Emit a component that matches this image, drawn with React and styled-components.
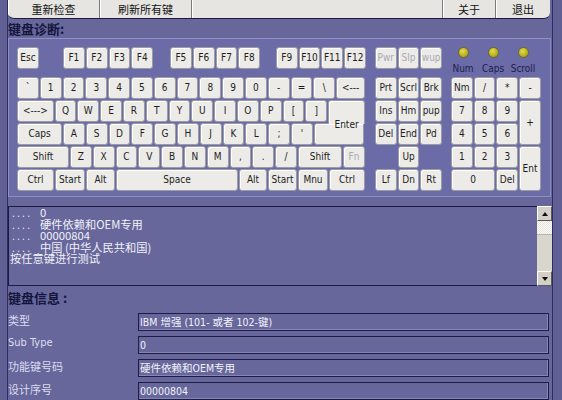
import React from 'react';
import styled, { createGlobalStyle } from 'styled-components';

const UI = `"DejaVu Sans Condensed", "DejaVu Sans", "Noto Sans CJK SC", sans-serif`;
const CJK = `"Noto Sans CJK SC", "DejaVu Sans", sans-serif`;

const Global = createGlobalStyle`
  html, body { margin: 0; padding: 0; }
  body { background: #606094; font-family: ${UI}; }
`;

const Window = styled.div`
  width: 562px;
  height: 400px;
  overflow: hidden;
  background: #606094;
  display: flex;
`;

const Main = styled.div`
  margin-left: 7px;
  width: 544px;
  flex: none;
  border-left: 1px solid #2e2e62;
  border-right: 1px solid #2e2e62;
  background: #67679c;
  display: flex;
  flex-direction: column;
`;

const TopBar = styled.div`
  display: flex;
  height: 18px;
  margin-right: 2px;
  background: #e6e5e1;
  border-bottom: 1px solid #1c1c3e;
  border-radius: 0 0 6px 6px;
  overflow: hidden;
`;

const TopButton = styled.div`
  width: ${(p) => p.$w}px;
  flex: none;
  box-sizing: border-box;
  display: flex;
  align-items: center;
  justify-content: center;
  font: 11px ${CJK};
  color: #111;
  border-right: ${(p) => (p.$last ? 'none' : '1px solid #7a7a7a')};
  box-shadow: inset 1px 0 0 #ffffff;
`;

const TopSpacer = styled.div`
  flex: 1;
  border-right: 1px solid #7a7a7a;
  box-shadow: inset 1px 0 0 #ffffff;
`;

const SectionTitle = styled.div`
  height: ${(p) => p.$h || 19}px;
  line-height: ${(p) => p.$h || 19}px;
  margin-top: ${(p) => p.$mt || 0}px;
  font: bold 13px ${CJK};
  color: #15153c;
  white-space: pre;
`;

const Panel = styled.div`
  box-sizing: border-box;
  height: 160px;
  margin-right: 1px;
  padding: 8px 0 0 8px;
  background: #6b6ba7;
  border: 1px solid #8f8fc2;
  border-right-color: #8a8abd;
  display: flex;
  flex-direction: column;
`;

const FnRow = styled.div`
  display: flex;
  align-items: flex-start;
  height: 22px;
`;

const KeyGroup = styled.div`
  display: flex;
  gap: 1px;
  margin-left: ${(p) => p.$ml || 0}px;
`;

const Key = styled.div`
  box-sizing: border-box;
  width: ${(p) => (p.$w ? `${p.$w}px` : 'auto')};
  height: 22px;
  flex: none;
  display: flex;
  align-items: center;
  justify-content: center;
  background: #ecebe8;
  border: 1px solid #9c9ca4;
  border-radius: 3px;
  box-shadow: inset 1px 1px 0 #ffffff;
  color: ${(p) => (p.$dim ? '#a9a9b4' : '#1c1c1c')};
  font-size: 10px;
  font-family: ${UI};
  white-space: pre;
  grid-column: ${(p) => p.$col || 'auto'};
  grid-row: ${(p) => p.$row || 'auto'};
  ${(p) => (p.$row || p.$col ? 'width: auto; height: auto;' : '')}
`;

const EnterTop = styled(Key)`
  height: 24px;
  margin-bottom: -2px;
  border-bottom: none;
  border-radius: 3px 3px 0 0;
  position: relative;
  z-index: 1;
  align-items: flex-end;
`;

const EnterLabel = styled.span`
  transform: translateY(6px);
`;

const EnterBottom = styled(Key)`
  border-radius: 3px 0 3px 3px;
`;

const LedGroup = styled.div`
  display: flex;
  margin-left: ${(p) => p.$ml || 0}px;
`;

const LedCell = styled.div`
  width: 30px;
  display: flex;
  flex-direction: column;
  align-items: center;
  gap: 5px;
`;

const Led = styled.span`
  width: 11px;
  height: 11px;
  box-sizing: border-box;
  border-radius: 50%;
  border: 1px solid #6d6a24;
  background: radial-gradient(circle at 40% 35%, #e2da52, #bdb423 55%, #8d8618);
`;

const LedLabel = styled.span`
  font: 10px ${UI};
  color: #1d1d4d;
  line-height: 11px;
`;

const Board = styled.div`
  display: flex;
  margin-top: 8px;
`;

const MainBlock = styled.div`
  width: 348px;
  display: flex;
  flex-direction: column;
  gap: 1px;
`;

const KeyRow = styled.div`
  display: flex;
  gap: 1px;
  height: 22px;
  align-items: flex-start;
`;

const KeyGrid = styled.div`
  display: grid;
  grid-template-columns: repeat(${(p) => p.$cols}, ${(p) => p.$cw}px);
  grid-template-rows: repeat(5, 22px);
  gap: 1px;
  margin-left: ${(p) => p.$ml}px;
`;

const LogRow = styled.div`
  display: flex;
  height: 80px;
  margin-top: 9px;
`;

const LogText = styled.div`
  flex: 1;
  box-sizing: border-box;
  border: 1px solid #1b1b42;
  border-right: none;
  padding: 0 0 0 1px;
  color: #f2f2f8;
  font: 11.25px ${CJK};
  line-height: 11.5px;
`;

const LogLine = styled.div`
  white-space: pre;
  height: 11.5px;
`;

const Dots = styled.span`
  display: inline-block;
  width: 30px;
  padding-left: 2px;
  box-sizing: border-box;
  letter-spacing: 2.2px;
  font-family: ${UI};
  font-size: 10px;
`;

const ScrollBar = styled.div`
  width: 15px;
  flex: none;
  display: flex;
  flex-direction: column;
  background: #d9d6cd;
`;

const ScrollBtn = styled.div`
  height: 15px;
  box-sizing: border-box;
  background: #d4d0c8;
  border: 1px solid;
  border-color: #ffffff #5a5a5a #5a5a5a #ffffff;
  display: flex;
  align-items: center;
  justify-content: center;
`;

const Arrow = styled.span`
  width: 0;
  height: 0;
  border-left: 3.5px solid transparent;
  border-right: 3.5px solid transparent;
  ${(p) =>
    p.$up ? 'border-bottom: 4px solid #111;' : 'border-top: 4px solid #111;'}
`;

const Thumb = styled.div`
  height: 14px;
  box-sizing: border-box;
  background: repeating-conic-gradient(#fbfaf6 0 25%, #e8e6df 0 50%) 0 0 / 2px 2px;
  border-bottom: 1px solid #b8b5ac;
`;

const Track = styled.div`
  flex: 1;
`;

const InfoList = styled.div`
  display: flex;
  flex-direction: column;
  gap: 5px;
  margin-top: 5px;
`;

const InfoRow = styled.div`
  display: flex;
  align-items: center;
  height: 18px;
`;

const InfoLabel = styled.div`
  width: 130px;
  flex: none;
  padding-bottom: 5px;
  font: 11px ${UI};
  color: #dcdcf0;
  white-space: pre;
`;

const Field = styled.div`
  width: 411px;
  height: 18px;
  box-sizing: border-box;
  border: 1px solid #1c1c44;
  box-shadow: inset -1px -1px 0 #8585b6;
  padding-left: 1px;
  font: 10.5px ${UI};
  line-height: 16px;
  color: #f2f2fa;
  white-space: pre;
`;

const row1 = ['`', '1', '2', '3', '4', '5', '6', '7', '8', '9', '0', '-', '=', '\\'];
const row2 = ['Q', 'W', 'E', 'R', 'T', 'Y', 'U', 'I', 'O', 'P', '[', ']'];
const row3 = ['A', 'S', 'D', 'F', 'G', 'H', 'J', 'K', 'L', ';', "'"];
const row4 = ['Z', 'X', 'C', 'V', 'B', 'N', 'M', ',', '.', '/'];
const row5 = [
  ['Ctrl', 37],
  ['Start', 30],
  ['Alt', 29],
  ['Space', 122],
  ['Alt', 28],
  ['Start', 29],
  ['Mnu', 30],
  ['Ctrl', 36],
];
const U = 21.8;

const info = [
  ['类型', 'IBM 增强 (101- 或者 102-键)'],
  ['Sub Type', '0'],
  ['功能键号码', '硬件依赖和OEM专用'],
  ['设计序号', '00000804'],
];

export default function App() {
  return (
    <Window>
      <Global />
      <Main>
        <TopBar>
          <TopButton $w={92}>重新检查</TopButton>
          <TopButton $w={92}>刷新所有键</TopButton>
          <TopSpacer />
          <TopButton $w={53}>关于</TopButton>
          <TopButton $w={54} $last>
            退出
          </TopButton>
        </TopBar>
        <SectionTitle>键盘诊断:</SectionTitle>
        <Panel>
          <FnRow>
            <Key $w={22}>Esc</Key>
            <KeyGroup $ml={24}>
              {['F1', 'F2', 'F3', 'F4'].map((k) => (
                <Key key={k} $w={U}>{k}</Key>
              ))}
            </KeyGroup>
            <KeyGroup $ml={16.8}>
              {['F5', 'F6', 'F7', 'F8'].map((k) => (
                <Key key={k} $w={U}>{k}</Key>
              ))}
            </KeyGroup>
            <KeyGroup $ml={15.6}>
              {['F9', 'F10', 'F11', 'F12'].map((k) => (
                <Key key={k} $w={U}>{k}</Key>
              ))}
            </KeyGroup>
            <KeyGroup $ml={9}>
              {['Pwr', 'Slp', 'wup'].map((k) => (
                <Key key={k} $w={21.7} $dim>{k}</Key>
              ))}
            </KeyGroup>
            <LedGroup $ml={6}>
              {['Num', 'Caps', 'Scroll'].map((k) => (
                <LedCell key={k}>
                  <Led />
                  <LedLabel>{k}</LedLabel>
                </LedCell>
              ))}
            </LedGroup>
          </FnRow>
          <Board>
            <MainBlock>
              <KeyRow>
                {row1.map((k) => (
                  <Key key={k} $w={U}>{k}</Key>
                ))}
                <Key $w={28.8}>{'<---'}</Key>
              </KeyRow>
              <KeyRow>
                <Key $w={36.6}>{'<--->'}</Key>
                {row2.map((k) => (
                  <Key key={k} $w={U}>{k}</Key>
                ))}
                <EnterTop $w={36.8}>
                  <EnterLabel>Enter</EnterLabel>
                </EnterTop>
              </KeyRow>
              <KeyRow>
                <Key $w={45}>Caps</Key>
                {row3.map((k) => (
                  <Key key={k} $w={U}>{k}</Key>
                ))}
                <EnterBottom $w={50.2} />
              </KeyRow>
              <KeyRow>
                <Key $w={52}>Shift</Key>
                {row4.map((k) => (
                  <Key key={k} $w={U}>{k}</Key>
                ))}
                <Key $w={44}>Shift</Key>
                <Key $w={22} $dim>Fn</Key>
              </KeyRow>
              <KeyRow>
                {row5.map(([k, w], i) => (
                  <Key key={i} $w={w}>{k}</Key>
                ))}
              </KeyRow>
            </MainBlock>
            <KeyGrid $cols={3} $cw={21.7} $ml={10}>
              <Key $row="1" $col="1">Prt</Key>
              <Key $row="1" $col="2">Scrl</Key>
              <Key $row="1" $col="3">Brk</Key>
              <Key $row="2" $col="1">Ins</Key>
              <Key $row="2" $col="2">Hm</Key>
              <Key $row="2" $col="3">pup</Key>
              <Key $row="3" $col="1">Del</Key>
              <Key $row="3" $col="2">End</Key>
              <Key $row="3" $col="3">Pd</Key>
              <Key $row="4" $col="2">Up</Key>
              <Key $row="5" $col="1">Lf</Key>
              <Key $row="5" $col="2">Dn</Key>
              <Key $row="5" $col="3">Rt</Key>
            </KeyGrid>
            <KeyGrid $cols={4} $cw={21.75} $ml={8.9}>
              <Key $row="1" $col="1">Nm</Key>
              <Key $row="1" $col="2">/</Key>
              <Key $row="1" $col="3">*</Key>
              <Key $row="1" $col="4">-</Key>
              <Key $row="2" $col="1">7</Key>
              <Key $row="2" $col="2">8</Key>
              <Key $row="2" $col="3">9</Key>
              <Key $row="2 / span 2" $col="4">+</Key>
              <Key $row="3" $col="1">4</Key>
              <Key $row="3" $col="2">5</Key>
              <Key $row="3" $col="3">6</Key>
              <Key $row="4" $col="1">1</Key>
              <Key $row="4" $col="2">2</Key>
              <Key $row="4" $col="3">3</Key>
              <Key $row="4 / span 2" $col="4">Ent</Key>
              <Key $row="5" $col="1 / span 2">0</Key>
              <Key $row="5" $col="3">Del</Key>
            </KeyGrid>
          </Board>
        </Panel>
        <LogRow>
          <LogText>
            <LogLine>
              <Dots>....</Dots>
              {'0'}
            </LogLine>
            <LogLine>
              <Dots>....</Dots>
              {'硬件依赖和OEM专用'}
            </LogLine>
            <LogLine>
              <Dots>....</Dots>
              {'00000804'}
            </LogLine>
            <LogLine>
              <Dots>....</Dots>
              {'中国 (中华人民共和国)'}
            </LogLine>
            <LogLine>按任意键进行测试</LogLine>
          </LogText>
          <ScrollBar>
            <ScrollBtn>
              <Arrow $up />
            </ScrollBtn>
            <Thumb />
            <Track />
            <ScrollBtn>
              <Arrow />
            </ScrollBtn>
          </ScrollBar>
        </LogRow>
        <SectionTitle $h={20} $mt={2}>{'键盘信息 :'}</SectionTitle>
        <InfoList>
          {info.map(([l, v]) => (
            <InfoRow key={l}>
              <InfoLabel>{l}</InfoLabel>
              <Field>{v}</Field>
            </InfoRow>
          ))}
        </InfoList>
      </Main>
    </Window>
  );
}
